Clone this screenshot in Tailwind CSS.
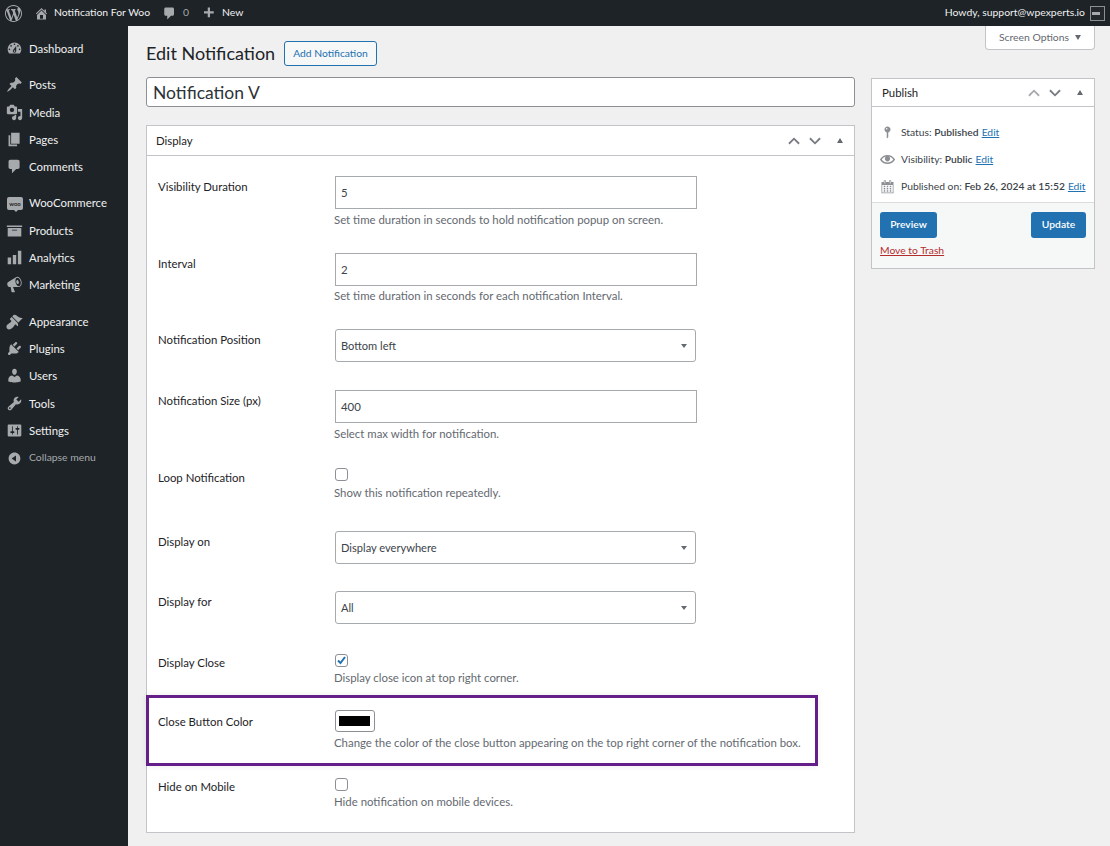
<!DOCTYPE html>
<html lang="en">
<head>
    <meta charset="UTF-8">
    <meta name="viewport" content="width=device-width, initial-scale=1.0">
    <title>Edit Notification</title>
    <script src="https://cdn.jsdelivr.net/npm/@tailwindcss/browser@4"></script>
</head>
<body class="bg-[#f0f0f1] text-[#3c434a] font-['Lato',sans-serif] text-[11.4px] h-[846px] overflow-hidden">

    <!-- admin bar -->
    <header class="h-[26px] bg-[#1d2327] text-[#f0f0f1] flex items-center text-[10.4px] relative">
        <svg class="w-[17px] h-[17px] ml-[5px] fill-[#a7aaad]" viewBox="0 0 20 20"><path d="M20 10c0-5.51-4.49-10-10-10C4.48 0 0 4.49 0 10c0 5.52 4.48 10 10 10 5.51 0 10-4.48 10-10zM7.78 15.37L4.37 6.22c.55-.02 1.17-.08 1.17-.08.5-.06.44-1.13-.06-1.11 0 0-1.45.11-2.37.11-.18 0-.37 0-.58-.01C4.12 2.69 6.87 1.11 10 1.11c2.33 0 4.45.87 6.05 2.34-.68-.11-1.65.39-1.65 1.58 0 .74.45 1.36.9 2.1.35.61.55 1.36.55 2.46 0 1.49-1.4 5-1.4 5l-3.03-8.37c.54-.02.82-.17.82-.17.5-.05.44-1.25-.06-1.22 0 0-1.44.12-2.38.12-.87 0-2.33-.12-2.33-.12-.5-.03-.56 1.2-.06 1.22l.92.08 1.26 3.41zM17.41 10c.24-.64.74-1.87.43-4.25.7 1.29 1.05 2.71 1.05 4.25 0 3.29-1.73 6.24-4.4 7.78.97-2.59 1.94-5.2 2.92-7.78zM6.1 18.09C3.12 16.65 1.11 13.53 1.11 10c0-1.3.23-2.48.72-3.59C3.25 10.3 4.67 14.2 6.1 18.09zm4.03-6.63l2.58 6.98c-.86.29-1.76.45-2.71.45-.79 0-1.57-.11-2.29-.33.81-2.38 1.62-4.74 2.42-7.1z"/></svg>
        <svg class="w-[15px] h-[15px] ml-[12px] fill-[#a7aaad]" viewBox="0 0 20 20"><path d="M16 8.5l1.53 1.53-1.06 1.06L10 4.62l-6.47 6.47-1.06-1.06L10 2.5l4 4v-2h2v4zm-6-2.46l6 5.99V18H4v-5.97zM12 17v-5H8v5h4z"/></svg>
        <span class="ml-[5px] w-[96px] whitespace-nowrap">Notification For Woo</span>
        <svg class="w-[15px] h-[15px] ml-[12px] fill-[#a7aaad]" viewBox="0 0 20 20"><path d="M5 2h9c1.1 0 2 .9 2 2v7c0 1.1-.9 2-2 2h-2l-5 5v-5H5c-1.1 0-2-.9-2-2V4c0-1.1.9-2 2-2z"/></svg>
        <span class="ml-[6px] text-[#a7aaad]">0</span>
        <svg class="w-[15px] h-[15px] ml-[12px] fill-[#a7aaad]" viewBox="0 0 20 20"><path d="M17 7v3h-5v5H9v-5H4V7h5V2h3v5h5z"/></svg>
        <span class="ml-[6px]">New</span>
        <span class="ml-auto">Howdy, support@wpexperts.io</span>
        <span class="w-[15px] h-[15px] ml-[5px] mr-[5px] border border-[#8c8f94] bg-[#23282d] flex items-center pl-[1px]"><span class="w-[8px] h-[3px] bg-[#a7aaad]"></span></span>
    </header>

    <div class="flex">
        <!-- sidebar -->
        <nav class="w-[128px] h-[820px] bg-[#1d2327] text-[#f0f0f1] pt-[8.9px] shrink-0">
            <a class="h-[27.3px] flex items-center"><svg class="w-[17px] h-[17px] ml-[6px] mr-[6px] fill-[#a7aaad]" viewBox="0 0 20 20"><path d="M3.76 16h12.48c1.1-1.37 1.76-3.11 1.76-5 0-4.42-3.58-8-8-8s-8 3.58-8 8c0 1.89.66 3.63 1.76 5zM10 4c.55 0 1 .45 1 1s-.45 1-1 1-1-.45-1-1 .45-1 1-1zM6 6c.55 0 1 .45 1 1s-.45 1-1 1-1-.45-1-1 .45-1 1-1zm8 0c.55 0 1 .45 1 1s-.45 1-1 1-1-.45-1-1 .45-1 1-1zm-5.37 5.55L12 7v6c0 1.1-.9 2-2 2s-2-.9-2-2c0-.57.24-1.08.63-1.45zM4 10c.55 0 1 .45 1 1s-.45 1-1 1-1-.45-1-1 .45-1 1-1zm12 0c.55 0 1 .45 1 1s-.45 1-1 1-1-.45-1-1 .45-1 1-1zm-5 3c0-.55-.45-1-1-1s-1 .45-1 1 .45 1 1 1 1-.45 1-1z"/></svg>Dashboard</a>
            <div class="h-[9px]"></div>
            <a class="h-[27.3px] flex items-center"><svg class="w-[17px] h-[17px] ml-[6px] mr-[6px] fill-[#a7aaad]" viewBox="0 0 20 20"><path d="M10.44 3.02l1.82-1.82 6.36 6.35-1.83 1.82c-1.05-.68-2.48-.57-3.41.36l-.75.75c-.92.93-1.04 2.35-.35 3.41l-1.83 1.82-2.41-2.41-2.8 2.79c-.42.42-3.38 2.71-3.8 2.29s1.86-3.39 2.28-3.81l2.79-2.79L4.1 9.36l1.83-1.82c1.05.69 2.48.57 3.4-.36l.75-.75c.93-.92 1.05-2.35.36-3.41z"/></svg>Posts</a>
            <a class="h-[27.3px] flex items-center"><svg class="w-[17px] h-[17px] ml-[6px] mr-[6px] fill-[#a7aaad]" viewBox="0 0 20 20"><path d="M13 11V4c0-.55-.45-1-1-1h-1.67L9 1H5L3.67 3H2c-.55 0-1 .45-1 1v7c0 .55.45 1 1 1h10c.55 0 1-.45 1-1zM7 4.5c1.38 0 2.5 1.12 2.5 2.5S8.38 9.5 7 9.5 4.5 8.38 4.5 7 5.62 4.5 7 4.5zM14 6h5v10.5c0 1.38-1.12 2.5-2.5 2.5S14 17.88 14 16.5s1.12-2.5 2.5-2.5c.17 0 .34.02.5.05V9h-3V6zm-4 8.05V13h2v3.5c0 1.38-1.12 2.5-2.5 2.5S7 17.88 7 16.5 8.12 14 9.5 14c.17 0 .34.02.5.05z"/></svg>Media</a>
            <a class="h-[27.3px] flex items-center"><svg class="w-[17px] h-[17px] ml-[6px] mr-[6px] fill-[#a7aaad]" viewBox="0 0 20 20"><path d="M6 15V2h10v13H6zm-1 1h8v2H3V5h2v11z"/></svg>Pages</a>
            <a class="h-[27.3px] flex items-center"><svg class="w-[17px] h-[17px] ml-[6px] mr-[6px] fill-[#a7aaad]" viewBox="0 0 20 20"><path d="M5 2h9c1.1 0 2 .9 2 2v7c0 1.1-.9 2-2 2h-2l-5 5v-5H5c-1.1 0-2-.9-2-2V4c0-1.1.9-2 2-2z"/></svg>Comments</a>
            <div class="h-[9px]"></div>
            <a class="h-[27.3px] flex items-center"><span class="relative w-[16px] h-[13px] ml-[7px] mr-[6px] rounded-[2px] bg-[#a7aaad] text-[#1d2327] text-[6px] leading-[13px] text-center font-bold">woo<span class="absolute left-[7px] top-[13px] w-0 h-0 border-x-[2px] border-x-transparent border-t-[2px] border-t-[#a7aaad]"></span></span>WooCommerce</a>
            <a class="h-[27.3px] flex items-center"><svg class="w-[17px] h-[17px] ml-[6px] mr-[6px] fill-[#a7aaad]" viewBox="0 0 20 20"><path d="M19 4v2H1V4h18zM2 7h16v10H2V7zm11 3V9H7v1h6z"/></svg>Products</a>
            <a class="h-[27.3px] flex items-center"><svg class="w-[17px] h-[17px] ml-[6px] mr-[6px] fill-[#a7aaad]" viewBox="0 0 20 20"><path d="M18 18V2h-4v16h4zm-6 0V7H8v11h4zm-6 0v-8H2v8h4z"/></svg>Analytics</a>
            <a class="h-[27.3px] flex items-center"><svg class="w-[17px] h-[17px] ml-[6px] mr-[6px] fill-[#a7aaad]" viewBox="0 0 20 20"><path d="M18.15 5.94c.46 1.62.38 3.22-.02 4.48-.42 1.28-1.26 2.18-2.3 2.48-.16.06-.26.06-.4.06-.06.02-.12.02-.18.02-.06.02-.14.02-.22.02h-6.8l2.22 5.5c.02.14-.06.26-.14.34-.08.1-.24.16-.34.16H6.95c-.1 0-.26-.06-.34-.16-.08-.08-.16-.2-.14-.34l-1-5.5H4.25l-.02-.02c-.5.06-1.08-.18-1.54-.62s-.88-1.08-1.06-1.88c-.24-.8-.2-1.56-.02-2.2.18-.62.58-1.08 1.06-1.3l.02-.02 9-5.4c.1-.06.18-.1.24-.16.06-.04.14-.08.24-.12.16-.08.28-.12.5-.18 1.04-.3 2.24.1 3.22.98s1.8 2.18 2.26 3.86zm-2.58 5.98h-.02c.4-.1.74-.34 1.04-.7.58-.7.86-1.76.86-3.04 0-.64-.1-1.3-.28-1.98-.34-1.36-1.02-2.5-1.78-3.24s-1.68-1.1-2.46-.88c-.82.22-1.4.96-1.7 2-.32 1.04-.28 2.36.06 3.72.38 1.36 1 2.5 1.8 3.24.78.74 1.62 1.1 2.48.88zm-2.54-7.08c.22-.04.42-.02.62.04.38.16.76.48 1.02 1s.42 1.2.42 1.78c0 .3-.04.56-.12.8-.18.48-.44.84-.86.94-.34.1-.8-.06-1.14-.4-.36-.32-.66-.8-.78-1.38-.18-.56-.2-1.12-.06-1.58.12-.44.42-.88.9-1.2z"/></svg>Marketing</a>
            <div class="h-[9px]"></div>
            <a class="h-[27.3px] flex items-center"><svg class="w-[17px] h-[17px] ml-[6px] mr-[6px] fill-[#a7aaad]" viewBox="0 0 20 20"><path d="M14.48 11.06L7.41 3.99l1.5-1.5c.5-.56 2.3-.47 3.51.32 1.21.8 1.43 1.28 2.91 2.1 1.18.64 2.45 1.26 4.45.85zm-.71.71L6.7 4.7 4.93 6.47c-.39.39-.39 1.02 0 1.41l1.06 1.06c.39.39.39 1.03 0 1.42-.6.6-1.43 1.11-2.21 1.69-.35.26-.7.53-1.01.84C1.43 13.23.5 14.79.5 16.22c0 .79.27 1.57.91 2.21.64.64 1.42.91 2.21.91 1.43 0 2.99-.93 4.33-2.27.31-.31.58-.66.84-1.01.58-.78 1.09-1.61 1.69-2.21.39-.39 1.03-.39 1.42 0l1.06 1.06c.39.39 1.02.39 1.41 0z"/></svg>Appearance</a>
            <a class="h-[27.3px] flex items-center"><svg class="w-[17px] h-[17px] ml-[6px] mr-[6px] fill-[#a7aaad]" viewBox="0 0 20 20"><path d="M13.11 4.36L9.87 7.6 8 5.73l3.24-3.24c.35-.34 1.05-.2 1.56.32.52.51.66 1.21.31 1.55zm-8 1.77l.91-1.12 9.01 9.01-1.19.84c-.71.71-2.63 1.16-3.82 1.16H6.14L4.9 17.26c-.59.59-1.54.59-2.12 0-.59-.58-.59-1.53 0-2.12l1.24-1.24v-3.88c0-1.13.4-3.19 1.09-3.89zm7.26 3.97l3.24-3.24c.34-.35 1.04-.21 1.55.31.52.51.66 1.21.31 1.55l-3.24 3.25z"/></svg>Plugins</a>
            <a class="h-[27.3px] flex items-center"><svg class="w-[17px] h-[17px] ml-[6px] mr-[6px] fill-[#a7aaad]" viewBox="0 0 20 20"><path d="M10 9.25c-2.27 0-2.73-3.44-2.73-3.44C7 4.02 7.82 2 9.97 2c2.16 0 2.98 2.02 2.71 3.81 0 0-.41 3.44-2.68 3.44zm0 2.57L12.72 10c2.39 0 4.52 2.33 4.52 4.53v2.49s-3.65 1.13-7.24 1.13c-3.65 0-7.24-1.13-7.24-1.13v-2.49c0-2.25 1.94-4.48 4.47-4.48z"/></svg>Users</a>
            <a class="h-[27.3px] flex items-center"><svg class="w-[17px] h-[17px] ml-[6px] mr-[6px] fill-[#a7aaad]" viewBox="0 0 20 20"><path d="M16.68 9.77c-1.34 1.34-3.3 1.67-4.95.99l-5.41 6.52c-.99.99-2.59.99-3.58 0s-.99-2.59 0-3.57l6.52-5.42c-.68-1.65-.35-3.61.99-4.95 1.28-1.28 3.12-1.62 4.72-1.06l-2.89 2.89 2.82 2.82 2.86-2.87c.53 1.58.18 3.39-1.08 4.65zM3.81 16.21c.4.39 1.04.39 1.43 0 .4-.4.4-1.04 0-1.43-.39-.4-1.03-.4-1.43 0-.39.39-.39 1.03 0 1.43z"/></svg>Tools</a>
            <a class="h-[27.3px] flex items-center"><svg class="w-[17px] h-[17px] ml-[6px] mr-[6px] fill-[#a7aaad]" viewBox="0 0 20 20"><path d="M18 16V4c0-.55-.45-1-1-1H3c-.55 0-1 .45-1 1v12c0 .55.45 1 1 1h14c.55 0 1-.45 1-1zM8 11h1c.55 0 1 .45 1 1s-.45 1-1 1H8v1.5c0 .28-.22.5-.5.5s-.5-.22-.5-.5V13H6c-.55 0-1-.45-1-1s.45-1 1-1h1V5.5c0-.28.22-.5.5-.5s.5.22.5.5V11zm5-2h-1c-.55 0-1-.45-1-1s.45-1 1-1h1V5.5c0-.28.22-.5.5-.5s.5.22.5.5V7h1c.55 0 1 .45 1 1s-.45 1-1 1h-1v5.5c0 .28-.22.5-.5.5s-.5-.22-.5-.5V9z"/></svg>Settings</a>
            <a class="h-[27.3px] flex items-center text-[#a7aaad] text-[10.4px] pt-[1px]"><svg class="w-[15px] h-[15px] ml-[7px] mr-[7px] fill-[#a7aaad]" viewBox="0 0 20 20"><path d="M10 2.16c4.33 0 7.84 3.51 7.84 7.84s-3.51 7.84-7.84 7.84S2.16 14.33 2.16 10 5.71 2.16 10 2.16zm2 11.72V6.12L6.18 9.97z"/></svg>Collapse menu</a>
        </nav>

        <main class="flex-1 pl-[18px] pr-[15px] relative">
            <!-- screen options -->
            <div class="absolute right-[15px] top-0 w-[110px] h-[24px] bg-white border border-t-0 border-[#c3c4c7] rounded-b-[4px] flex items-center justify-center gap-[6px] text-[10.4px] text-[#646970]">
                Screen Options
                <span class="w-0 h-0 border-x-[3px] border-x-transparent border-t-[5px] border-t-[#646970]"></span>
            </div>

            <div class="flex items-center h-[25px] mt-[15px]">
                <h1 class="w-[129px] text-[18px] leading-[25px] text-[#1d2327] whitespace-nowrap">Edit Notification</h1>
                <a class="ml-[9px] w-[93px] h-[25px] border border-[#2271b1] rounded-[3px] text-[#2271b1] bg-[#f6f7f7] text-[10.3px] flex items-center justify-center">Add Notification</a>
            </div>

            <div class="flex gap-[16px] mt-[11px] items-start">
                <!-- left column -->
                <div class="w-[709px] shrink-0">
                    <div class="h-[30px] bg-white border border-[#8c8f94] rounded-[3px] pl-[6px] text-[17.5px] leading-[30px] text-[#2c3338]">Notification V</div>

                    <section class="mt-[18px] h-[708px] bg-white border border-[#c3c4c7]">
                        <div class="h-[30px] border-b border-[#c3c4c7] flex items-center pl-[9px] text-[#1d2327]">
                            <span>Display</span>
                            <div class="ml-auto flex items-center mr-[11px]">
                                <svg class="w-[12px] h-[8px] stroke-[#787c82] fill-none" stroke-width="2" viewBox="0 0 13 8"><path d="M1 7l5.5-5.5L12 7"/></svg>
                                <svg class="w-[12px] h-[8px] ml-[9px] stroke-[#787c82] fill-none" stroke-width="2" viewBox="0 0 13 8"><path d="M1 1l5.5 5.5L12 1"/></svg>
                                <span class="ml-[16px] w-0 h-0 border-x-[3px] border-x-transparent border-b-[5px] border-b-[#646970]"></span>
                            </div>
                        </div>

                        <!-- rows -->
                        <div class="pt-[20px] pl-[11px]">
                            <div class="flex h-[77px]">
                                <label class="w-[177px] pt-[2px] text-[#1d2327]">Visibility Duration</label>
                                <div><div class="w-[362px] h-[33px] border border-[#a7aaad] pl-[5px] leading-[31px]">5</div><p class="mt-[2px] -ml-[1px] text-[#646970]">Set time duration in seconds to hold notification popup on screen.</p></div>
                            </div>
                            <div class="flex h-[76px]">
                                <label class="w-[177px] pt-[2px] text-[#1d2327]">Interval</label>
                                <div><div class="w-[362px] h-[33px] border border-[#a7aaad] pl-[5px] leading-[31px]">2</div><p class="mt-[1px] -ml-[1px] text-[#646970]">Set time duration in seconds for each notification Interval.</p></div>
                            </div>
                            <div class="flex h-[61px]">
                                <label class="w-[177px] pt-[2px] text-[#1d2327]">Notification Position</label>
                                <div class="w-[361px] h-[33px] border border-[#a7aaad] rounded-[3px] pl-[5px] pr-[8px] pt-[2px] flex items-center justify-between text-[11.1px]">Bottom left<span class="-mt-[2px] w-0 h-0 border-x-[3px] border-x-transparent border-t-[4px] border-t-[#646970]"></span></div>
                            </div>
                            <div class="flex h-[78px]">
                                <label class="w-[177px] pt-[2px] text-[#1d2327]">Notification Size (px)</label>
                                <div><div class="w-[362px] h-[33px] border border-[#a7aaad] pl-[5px] leading-[31px]">400</div><p class="mt-[2px] -ml-[1px] text-[#646970]">Select max width for notification.</p></div>
                            </div>
                            <div class="flex h-[63px]">
                                <label class="w-[177px] pt-[1px] text-[#1d2327]">Loop Notification</label>
                                <div><div class="w-[13px] h-[13px] border border-[#8c8f94] rounded-[3px]"></div><p class="mt-[3px] -ml-[1px] text-[#646970]">Show this notification repeatedly.</p></div>
                            </div>
                            <div class="flex h-[60px]">
                                <label class="w-[177px] pt-[2px] text-[#1d2327]">Display on</label>
                                <div class="w-[361px] h-[33px] border border-[#a7aaad] rounded-[3px] pl-[5px] pr-[8px] pt-[2px] flex items-center justify-between text-[11.1px]">Display everywhere<span class="-mt-[2px] w-0 h-0 border-x-[3px] border-x-transparent border-t-[4px] border-t-[#646970]"></span></div>
                            </div>
                            <div class="flex h-[63px]">
                                <label class="w-[177px] pt-[2px] text-[#1d2327]">Display for</label>
                                <div class="w-[361px] h-[33px] border border-[#a7aaad] rounded-[3px] pl-[5px] pr-[8px] pt-[2px] flex items-center justify-between text-[11.1px]">All<span class="-mt-[2px] w-0 h-0 border-x-[3px] border-x-transparent border-t-[4px] border-t-[#646970]"></span></div>
                            </div>
                            <div class="flex h-[57px]">
                                <label class="w-[177px] text-[#1d2327]">Display Close</label>
                                <div>
                                    <div class="w-[13px] h-[13px] border border-[#8c8f94] rounded-[3px] flex items-center justify-center">
                                        <svg class="w-[11px] h-[11px] fill-none stroke-[#2271b1]" stroke-width="2" viewBox="0 0 11 11"><path d="M2 5.5l2.5 2.5L9 2"/></svg>
                                    </div>
                                    <p class="mt-[2px] -ml-[1px] text-[#646970]">Display close icon at top right corner.</p>
                                </div>
                            </div>
                            <div class="flex h-[67px] relative">
                                <label class="w-[177px] pt-[2px] shrink-0 text-[#1d2327]">Close Button Color</label>
                                <div>
                                    <div class="w-[40px] h-[22px] border border-[#8c8f94] rounded-[3px] pl-[3px] pr-[4px] py-[5px] -mt-[1px]"><div class="w-full h-full bg-black"></div></div>
                                    <p class="mt-[2px] -ml-[1px] text-[#646970] whitespace-nowrap">Change the color of the close button appearing on the top right corner of the notification box.</p>
                                </div>
                                <div class="absolute left-[-12px] top-[-16px] w-[672px] h-[71px] border-[3px] border-[#642088] shadow-[0_0_6px_rgba(0,0,0,0.08)]"></div>
                            </div>
                            <div class="flex">
                                <label class="w-[177px] text-[#1d2327]">Hide on Mobile</label>
                                <div><div class="w-[13px] h-[13px] border border-[#8c8f94] rounded-[3px]"></div><p class="mt-[2px] -ml-[1px] text-[#646970]">Hide notification on mobile devices.</p></div>
                            </div>
                        </div>
                    </section>
                </div>

                <!-- publish box -->
                <aside class="w-[224px] shrink-0 bg-white border border-[#c3c4c7] mt-[1px]">
                    <div class="h-[28px] border-b border-[#c3c4c7] flex items-center pl-[10px] text-[#1d2327]">
                        <span>Publish</span>
                        <div class="ml-auto flex items-center mr-[11px]">
                            <svg class="w-[12px] h-[8px] stroke-[#a7aaad] fill-none" stroke-width="2" viewBox="0 0 13 8"><path d="M1 7l5.5-5.5L12 7"/></svg>
                            <svg class="w-[12px] h-[8px] ml-[9px] stroke-[#787c82] fill-none" stroke-width="2" viewBox="0 0 13 8"><path d="M1 1l5.5 5.5L12 1"/></svg>
                            <span class="ml-[16px] w-0 h-0 border-x-[3px] border-x-transparent border-b-[5px] border-b-[#646970]"></span>
                        </div>
                    </div>
                    <div class="h-[96px] border-b border-[#dcdcde] pt-[12px] text-[10.3px] whitespace-nowrap">
                        <div class="h-[27px] flex items-center">
                            <svg class="w-[15px] h-[15px] shrink-0 ml-[8px] mr-[6px] fill-[#8c8f94]" viewBox="0 0 20 20"><path d="M14 6c0 1.86-1.28 3.41-3 3.86V16c0 1-2 2-2 2V9.86c-1.72-.45-3-2-3-3.86 0-2.21 1.79-4 4-4s4 1.79 4 4zM8 5c0 .55.45 1 1 1s1-.45 1-1-.45-1-1-1-1 .45-1 1z"/></svg>
                            <span class="text-[#3c434a]">Status: <b class="font-semibold">Published</b></span> <a class="ml-[3px] text-[#2271b1] underline">Edit</a>
                        </div>
                        <div class="h-[27px] flex items-center">
                            <svg class="w-[15px] h-[15px] shrink-0 ml-[8px] mr-[6px] fill-[#8c8f94]" viewBox="0 0 20 20"><path d="M19.7 9.4C17.7 6 14 3.9 10 3.9S2.3 6 .3 9.4L0 10l.3.6c2 3.4 5.7 5.5 9.7 5.5s7.7-2.1 9.7-5.5l.3-.6-.3-.6zM10 14.1c-3.1 0-6-1.6-7.7-4.1C3.6 8 5.7 6.6 8 6.1c-.9.6-1.5 1.7-1.5 2.9 0 1.9 1.6 3.5 3.5 3.5s3.5-1.6 3.5-3.5c0-1.2-.6-2.3-1.5-2.9 2.3.5 4.4 1.9 5.7 3.9-1.7 2.5-4.6 4.1-7.7 4.1z"/></svg>
                            <span>Visibility: <b class="font-semibold">Public</b></span> <a class="ml-[3px] text-[#2271b1] underline">Edit</a>
                        </div>
                        <div class="h-[27px] flex items-center">
                            <svg class="w-[15px] h-[15px] shrink-0 ml-[8px] mr-[6px] fill-[#8c8f94]" viewBox="0 0 20 20"><path d="M15 4h3v15H2V4h3V3c0-.41.15-.76.44-1.06.29-.29.65-.44 1.06-.44s.77.15 1.06.44c.29.3.44.65.44 1.06v1h4V3c0-.41.15-.76.44-1.06.29-.29.65-.44 1.06-.44s.77.15 1.06.44c.29.3.44.65.44 1.06v1zM6 3v2.5c0 .14.05.26.15.36.09.09.21.14.35.14s.26-.05.35-.14c.1-.1.15-.22.15-.36V3c0-.14-.05-.26-.15-.35-.09-.1-.21-.15-.35-.15s-.26.05-.35.15c-.1.09-.15.21-.15.35zm7 0v2.5c0 .14.05.26.14.36.1.09.22.14.36.14s.26-.05.36-.14c.09-.1.14-.22.14-.36V3c0-.14-.05-.26-.14-.35-.1-.1-.22-.15-.36-.15s-.26.05-.36.15c-.09.09-.14.21-.14.35zm4 15V8H3v10h14zM7 9v2H5V9h2zm2 0h2v2H9V9zm4 2V9h2v2h-2zm-6 1v2H5v-2h2zm2 0h2v2H9v-2zm4 2v-2h2v2h-2zm-6 1v2H5v-2h2zm4 2H9v-2h2v2zm4 0h-2v-2h2v2z"/></svg>
                            <span>Published on: <b class="font-semibold">Feb 26, 2024 at 15:52</b></span> <a class="ml-[3px] text-[#2271b1] underline">Edit</a>
                        </div>
                    </div>
                    <div class="h-[65px] bg-[#f6f7f7] px-[8px] pt-[9px] relative">
                        <div class="flex justify-between">
                            <a class="w-[57px] h-[26px] bg-[#2271b1] text-white text-[10.3px] font-semibold rounded-[3px] flex items-center justify-center">Preview</a>
                            <a class="w-[55px] h-[26px] bg-[#2271b1] text-white text-[10.3px] font-semibold rounded-[3px] flex items-center justify-center">Update</a>
                        </div>
                        <a class="block mt-[5px] text-[10.3px] text-[#b32d2e] underline">Move to Trash</a>
                    </div>
                </aside>
            </div>
        </main>
    </div>
</body>
</html>
